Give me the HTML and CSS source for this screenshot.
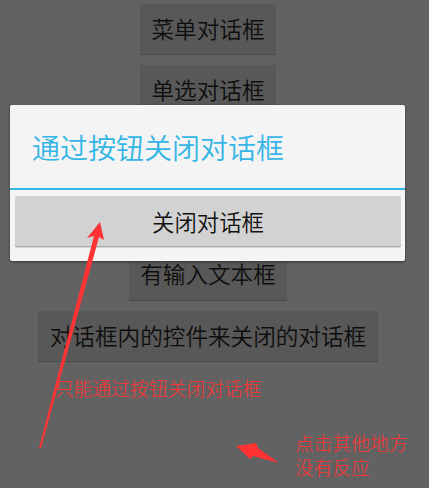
FILE: index.html
```html
<!DOCTYPE html>
<html lang="zh">
<head>
<meta charset="utf-8">
<link rel="stylesheet" href="styles.css">
</head>
<body>
<div class="screen">
  <div class="list">
    <div class="btn">菜单对话框</div>
    <div class="btn">单选对话框</div>
    <div class="btn btn-hidden"></div>
    <div class="btn btn-hidden"></div>
    <div class="btn">有输入文本框</div>
    <div class="btn">对话框内的控件来关闭的对话框</div>
  </div>

  <div class="dialog">
    <div class="dialog-title">通过按钮关闭对话框</div>
    <div class="dialog-divider"></div>
    <div class="dialog-body">
      <div class="dialog-btn">关闭对话框</div>
    </div>
  </div>

  <svg class="arrows" width="429" height="488" viewBox="0 0 429 488">
    <polygon points="100,222 87,238 94,236 39,448 41,448 99,237 104,240" fill="#ff3333"/>
    <polygon points="236,446 256,443 258,448 279,463 253,456 250,459" fill="#ff3333"/>
  </svg>

  <div class="note note-1">只能通过按钮关闭对话框</div>
  <div class="note note-2">
    <div class="note-line">点击其他地方</div>
    <div class="note-line">没有反应</div>
  </div>
</div>
</body>
</html>
```

FILE: styles.css
```css
html, body {
  margin: 0;
  padding: 0;
}
body {
  background: #626262;
  font-family: "Noto Sans CJK SC", "Noto Sans", sans-serif;
}
.screen {
  position: relative;
  width: 429px;
  height: 488px;
  overflow: hidden;
  background: #626262;
}
.list {
  display: flex;
  flex-direction: column;
  align-items: center;
  gap: 11.4px;
  padding-top: 4px;
  padding-right: 13px;
}
.btn {
  height: 50px;
  box-sizing: border-box;
  padding: 0 11.5px;
  display: flex;
  align-items: center;
  justify-content: center;
  background: #585858;
  box-shadow: 0 1px 0 #4c4c4c;
  color: #0e0e0e;
  font-size: 22.6px;
  font-weight: 350;
  line-height: 1;
  white-space: nowrap;
}
.btn-hidden {
  width: 160px;
}
.dialog {
  position: absolute;
  left: 10px;
  top: 105px;
  width: 395px;
  height: 156px;
  background: #f4f4f4;
  border-radius: 2px;
  box-shadow: 0 1px 3px rgba(0,0,0,0.45);
  display: flex;
  flex-direction: column;
}
.dialog-title {
  height: 83px;
  display: flex;
  align-items: center;
  padding-left: 22px;
  padding-top: 1px;
  box-sizing: border-box;
  color: #33b5e5;
  font-size: 28px;
  font-weight: 350;
  line-height: 1;
  white-space: nowrap;
}
.dialog-divider {
  height: 2px;
  background: #33b5e5;
}
.dialog-body {
  padding: 6px 4px 0 5px;
}
.dialog-btn {
  height: 50px;
  display: flex;
  align-items: center;
  justify-content: center;
  background: #d2d2d2;
  border-radius: 2px;
  box-shadow: 0 1.5px 0 #aeaeae;
  color: #111;
  font-size: 22.4px;
  font-weight: 350;
  line-height: 1;
}
.arrows {
  position: absolute;
  left: 0;
  top: 0;
}
.note {
  position: absolute;
  color: #ff3333;
  font-size: 18.8px;
  font-weight: 300;
  line-height: 24px;
  white-space: nowrap;
}
.note-1 {
  left: 55px;
  top: 376px;
}
.note-2 {
  left: 295px;
  top: 431px;
}
.note-line {
  height: 24px;
}
```
